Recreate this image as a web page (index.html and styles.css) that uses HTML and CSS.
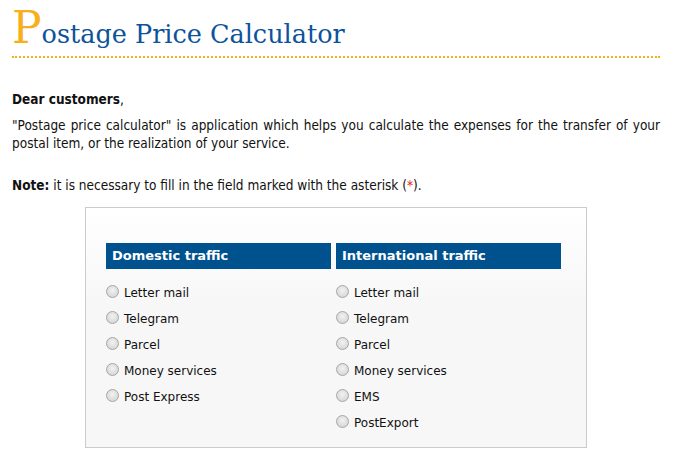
FILE: index.html
```
<!DOCTYPE html>
<html>
<head>
<meta charset="utf-8">
<link rel="stylesheet" href="styles.css">
</head>
<body>
<div class="page">
  <h1 class="title"><span class="initial">P</span>ostage Price Calculator</h1>
  <p class="greet"><b>Dear customers</b>,</p>
  <p class="intro">"Postage price calculator" is application which helps you calculate the expenses for the transfer of your postal item, or the realization of your service.</p>
  <p class="note"><b>Note:</b> it is necessary to fill in the field marked with the asterisk (<span class="ast">*</span>).</p>
  <div class="box">
    <div class="col">
      <div class="head">Domestic traffic</div>
      <ul class="opts">
        <li><span class="radio"></span>Letter mail</li>
        <li><span class="radio"></span>Telegram</li>
        <li><span class="radio"></span>Parcel</li>
        <li><span class="radio"></span>Money services</li>
        <li><span class="radio"></span>Post Express</li>
      </ul>
    </div>
    <div class="col">
      <div class="head">International traffic</div>
      <ul class="opts">
        <li><span class="radio"></span>Letter mail</li>
        <li><span class="radio"></span>Telegram</li>
        <li><span class="radio"></span>Parcel</li>
        <li><span class="radio"></span>Money services</li>
        <li><span class="radio"></span>EMS</li>
        <li><span class="radio"></span>PostExport</li>
      </ul>
    </div>
  </div>
</div>
</body>
</html>
```
FILE: styles.css
```
html, body { margin: 0; padding: 0; background: #fff; }
body { font-family: "DejaVu Sans Condensed", "DejaVu Sans", sans-serif; font-size: 13.5px; color: #111; }
.page { padding: 0 20px 0 12px; }
.title {
  margin: 0;
  padding-top: 6px;
  height: 44px;
  font-family: "DejaVu Serif", "Liberation Serif", serif;
  font-weight: normal;
  font-size: 25.5px;
  color: #0c539c;
  line-height: 44px;
  border-bottom: 2px dotted #f6b11a;
  padding-bottom: 6px;
}
.initial { font-size: 44px; color: #f7b01c; }
.greet { margin: 32px 0 0; line-height: 18px; }
.intro { margin: 8px 0 0; line-height: 18px; text-align: justify; }
.note { margin: 24px 0 0; line-height: 18px; }
.ast { color: #e0261b; }
.box {
  margin: 13px 0 0 73px;
  width: 460px;
  height: 204px;
  border: 1px solid #ccc;
  background: linear-gradient(#fff, #f7f7f7 40%);
  padding: 35px 20px 0 20px;
  display: flex;
  gap: 5px;
}
.col { width: 225px; }
.head {
  background: #00528f;
  color: #fff;
  font-family: "DejaVu Sans", sans-serif;
  font-weight: bold;
  font-size: 13px;
  height: 26px;
  line-height: 26px;
  padding-left: 6px;
}
.opts { list-style: none; margin: 14px 0 0; padding: 0; font-family: "DejaVu Sans", sans-serif; font-size: 12px; color: #111; }
.opts li { height: 26px; line-height: 20px; display: flex; align-items: flex-start; }
.radio {
  width: 13px; height: 13px;
  border-radius: 50%;
  border: 1px solid #a6a6a6;
  background: radial-gradient(circle at 50% 40%, #f2f2f2, #cfcfcf);
  margin: 2px 5px 0 0;
  box-sizing: border-box;
  flex: none;
}
```
